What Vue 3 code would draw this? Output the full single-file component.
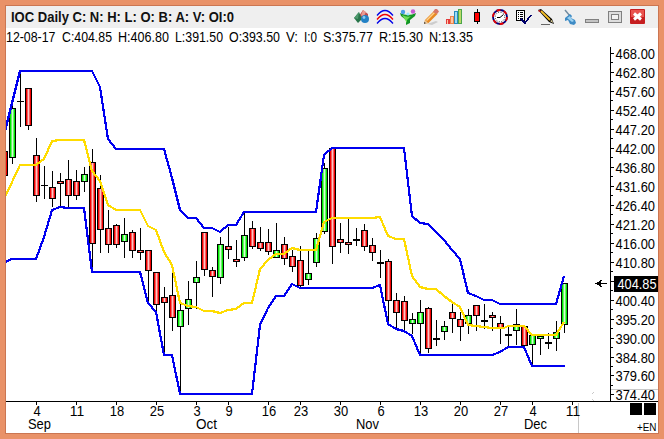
<template>
  <div class="window">
    <!-- 标题栏 -->
    <header class="title-bar">
      <svg class="title" width="300" height="22">
        <text x="5" y="16" textLength="223" lengthAdjust="spacingAndGlyphs">IOC Daily C: N: H: L: O: B: A: V: OI:0</text>
      </svg>
      <div class="toolbar">
        <!-- shapes -->
        <svg viewBox="0 0 23 22">
          <path d="M13 4l5 4v5l-6 1-3-4z" fill="#bd4a4d" />
          <path d="M13 4l3 2-3 6-2-3z" fill="#e99a91" />
          <path d="M4 12l5-6 3 7-4 4z" fill="#28754a" />
          <path d="M4 12l4 1 1-7z" fill="#4f9a6e" />
          <circle cx="15" cy="13" r="4" fill="#2381c5" />
          <circle cx="14" cy="11.5" r="1.4" fill="#8acaf0" />
        </svg>
        <!-- bands -->
        <svg viewBox="0 0 23 22" fill="none" stroke-width="1.3">
          <path d="M4 9.500Q12 -0.500 20 9.500M4 17.500Q12 7.500 20 17.500" stroke="#0000e8" />
          <path d="M4 13.500Q12 3.500 20 13.500" stroke="#f00000" />
        </svg>
        <!-- filter -->
        <svg viewBox="0 0 23 22">
          <path d="M4 7q8 4 16 0l-1 3-5 4v3l-4 2v-5l-5-4z" fill="#129526" />
          <path d="M6 9q6 3 9 1l-4 4v3z" fill="#6bdc55" />
          <circle cx="7" cy="6" r="2.2" fill="#4b9ee8" />
          <circle cx="17" cy="5.500" r="2.2" fill="#c65ad2" />
          <circle cx="12" cy="8" r="1.6" fill="#9be7ff" />
        </svg>
        <!-- pencil -->
        <svg viewBox="0 0 23 22">
          <path d="M8 18l9-3 2 1-6 3z" fill="#ccc" />
          <path d="M5 18l1-4 9-9 3.500 3-9 9z" fill="#e78a25" />
          <path d="M7 14l8-8 1 1-8 8z" fill="#ffd28a" />
          <path d="M14 6l2-3h2l2 2.500-2 2.500z" fill="#d7776a" />
          <path d="M5 18l1-4 3 3z" fill="#e9c99b" />
          <path d="M5 18v-2l2 1z" fill="#444" />
        </svg>
        <!-- bars -->
        <svg viewBox="0 0 23 22">
          <path d="M4 13h4v5H4z" fill="#e43b3b" />
          <path d="M8 10h4v8H8z" fill="#f0854a" />
          <path d="M12 5h4v13h-4z" fill="#288bbd" />
          <path d="M13 6h2v11h-2z" fill="#9ddcf2" />
          <path d="M16 3h4v15h-4z" fill="#4ca64a" />
          <path d="M17 4h2v13h-2z" fill="#b9d968" />
          <path d="M5 14h1v4H5zM9 11h2v6H9z" fill="#ffc6a4" />
        </svg>
        <!-- candle -->
        <svg viewBox="0 0 23 22" shape-rendering="crispEdges">
          <path d="M12 3h1v15h-1zM9 6h6v10H9z" fill="#000" />
          <path d="M10 7h4v8h-4z" fill="#f00" />
        </svg>
        <!-- clock -->
        <svg viewBox="0 0 23 22">
          <circle cx="12" cy="11" r="7" fill="#fff" stroke="#00007a" stroke-width="1.8" />
          <circle cx="12" cy="11" r="7" fill="none" stroke="#e80000" stroke-width="1.800" stroke-dasharray="4 3.33" />
          <circle cx="12" cy="11" r="4.8" fill="none" stroke="#000" stroke-width="0.800" stroke-dasharray="1 1.51" />
          <path d="M15.500 8.500l-3.500 3H9" fill="none" stroke="#000" />
        </svg>
        <!-- checklist -->
        <svg viewBox="0 0 23 22" shape-rendering="crispEdges">
          <path d="M5.500 4.500h8v10h-8z" fill="#fff" stroke="#000" />
          <path d="M7 6.500h1m1 0h3M7 8.500h1m1 0h3M7 10.500h1m1 0h3M7 12.500h1m1 0h3" stroke="#000" />
          <path d="M10 13l4 4 6-8" fill="none" stroke="#00006b" stroke-width="1.600" />
        </svg>
        <!-- draw -->
        <svg viewBox="0 0 23 22">
          <path d="M7 18.500h9" stroke="#666" />
          <path d="M4 4l3-1 11 10 2 5-5-2z" fill="#000" />
          <path d="M7 5l9 9" stroke="#f5bf29" stroke-width="1.800" />
          <path d="M4.500 4.500l2 1" stroke="#c32222" stroke-width="1.500" />
          <path d="M16 15l2-1 1 3z" fill="#e8d8a0" />
        </svg>
        <!-- pin -->
        <svg viewBox="0 0 23 22">
          <path d="M8 4l5 6" stroke="#718a9e" stroke-width="1.400" />
          <path d="M8 12l5-4 2 2-1 2 4 2 1 3-2 2-4-1-2-4-3 1z" fill="#3e8bc5" />
          <path d="M10 12l3-2 1 2 3 3-2 1z" fill="#9bd1f1" />
        </svg>
        <!-- minimise -->
        <svg viewBox="0 0 23 22" shape-rendering="crispEdges">
          <path d="M5.500 13.500h13v3h-13z" fill="#c4c4c4" stroke="#808080" />
        </svg>
        <!-- restore -->
        <svg viewBox="0 0 23 22" shape-rendering="crispEdges">
          <path d="M5.500 5.500h13v11h-13z" fill="#ddd" stroke="#808080" />
          <path d="M8.500 8.500h7v5h-7z" fill="#f2f2f2" stroke="#808080" />
        </svg>
        <!-- close -->
        <svg viewBox="0 0 23 22">
          <rect x="4" y="3" width="15" height="15" rx="1" fill="#c61e20" />
          <rect x="5" y="4" width="13" height="7" fill="#e9534e" />
          <path d="M8 7.500l7 6M15 7.500l-7 6" stroke="#fff" stroke-width="3" />
        </svg>
      </div>
    </header>

    <!-- 行情信息 -->
    <div class="quote">
      <svg width="652" height="18">
        <text v-for="q in quotes" :key="q.t" :x="q.x" y="14" :textLength="q.w" lengthAdjust="spacingAndGlyphs">{{ q.t }}</text>
      </svg>
    </div>

    <!-- K线图 -->
    <svg class="chart" width="652" height="387" viewBox="6 46 652 387">
      <defs>
        <linearGradient id="up">
          <stop offset="0.1" stop-color="#00e800" />
          <stop offset="0.5" stop-color="#d4ffd4" />
          <stop offset="0.9" stop-color="#00e800" />
        </linearGradient>
        <linearGradient id="down">
          <stop offset="0.1" stop-color="#f00000" />
          <stop offset="0.5" stop-color="#ffc4c4" />
          <stop offset="0.9" stop-color="#f00000" />
        </linearGradient>
      </defs>

      <g shape-rendering="crispEdges">
        <g v-for="c in candles" :key="c.x">
          <rect :x="c.x" :y="c.high" width="1" :height="c.low - c.high + 1" />
          <rect :x="c.x - 3" :y="c.top" width="7" :height="c.bottom - c.top + 1" />
          <rect v-if="c.kind !== 'd'" :x="c.x - 2" :y="c.top + 1" width="5" :height="c.bottom - c.top - 1" :fill="c.kind === 'u' ? 'url(#up)' : 'url(#down)'" />
        </g>
        <polyline class="band" :points="upper" />
        <polyline class="band" :points="lower" />
        <polyline class="middle" :points="middle" />

        <!-- 坐标轴 -->
        <path class="guide" d="M611 389.500h47M578.500 403v30M593.500 392v1M592.500 393v1M592.500 399v1M593.500 400v1" />
        <path class="axis" d="M610.500 47v355M6 401.500h652" />
        <path v-for="(p, i) in prices" :key="p" class="axis" :d="`M611 ${priceY(i)}h3${i < 18 ? `M611 ${priceY(i + 0.5)}h2` : ''}`" />
        <path v-for="d in days" :key="d[0]" class="axis" :d="`M${d[0] + 0.5} 402v3`" />
        <path d="M595 283h12v1h-12zM595 283.500l7-4-1.500 4 1.500 4zM630 403h12v12h-12zM644 403h12v12h-12z" />
      </g>

      <template v-for="(p, i) in prices" :key="p">
        <text v-if="i !== 12" x="615.5" :y="priceY(i) + 5" textLength="39.5" lengthAdjust="spacingAndGlyphs">{{ p }}</text>
      </template>
      <rect x="614" y="276" width="44" height="16" />
      <text class="last" x="617.5" y="289" textLength="39" lengthAdjust="spacingAndGlyphs">404.85</text>
      <text v-for="d in days" :key="d[0]" :x="d[0] + 1 - d[1].length * 3.6" y="416" :textLength="d[1].length * 7.2" lengthAdjust="spacingAndGlyphs">{{ d[1] }}</text>
      <text v-for="m in months" :key="m[1]" :x="m[0]" y="429" :textLength="m[2]" lengthAdjust="spacingAndGlyphs">{{ m[1] }}</text>
      <text class="lang" x="637" y="431" textLength="19.5" lengthAdjust="spacingAndGlyphs">+EN</text>
    </svg>
  </div>
</template>

<script setup>
const quotes = [
  { x: 0, w: 49.5, t: '12-08-17' },
  { x: 56, w: 50, t: 'C:404.85' },
  { x: 112, w: 51, t: 'H:406.80' },
  { x: 169, w: 48, t: 'L:391.50' },
  { x: 223, w: 51, t: 'O:393.50' },
  { x: 280, w: 12, t: 'V:' },
  { x: 298, w: 13, t: 'I:0' },
  { x: 317, w: 50, t: 'S:375.77' },
  { x: 373, w: 44, t: 'R:15.30' },
  { x: 423, w: 44, t: 'N:13.35' }
]

// kind, high, top, bottom, low (u: up, r: down, d: doji)
const rows = [
  ['r', 151, 151, 175, 175], ['u', 105, 108, 157, 163], ['d', 73, 101, 101, 126],
  ['r', 88, 88, 125, 129], ['r', 138, 155, 195, 201], ['d', 166, 185, 185, 198],
  ['r', 171, 187, 198, 206], ['r', 173, 181, 183, 205], ['r', 160, 179, 195, 206],
  ['r', 170, 181, 195, 199], ['u', 167, 174, 181, 191], ['r', 149, 162, 243, 270],
  ['r', 175, 188, 229, 252], ['r', 210, 228, 244, 252], ['r', 224, 225, 244, 247],
  ['u', 218, 234, 241, 257], ['r', 230, 232, 250, 257], ['r', 228, 250, 252, 259],
  ['r', 250, 250, 270, 303], ['r', 272, 272, 304, 311], ['r', 287, 297, 302, 354],
  ['r', 272, 295, 317, 330], ['u', 303, 310, 326, 393], ['u', 281, 299, 308, 324],
  ['u', 261, 277, 282, 308], ['r', 232, 232, 269, 275], ['r', 267, 270, 276, 296],
  ['u', 237, 244, 277, 283], ['r', 227, 246, 249, 258], ['r', 240, 259, 261, 266],
  ['u', 212, 235, 257, 260], ['r', 221, 228, 246, 248], ['r', 227, 242, 248, 250],
  ['r', 229, 242, 251, 254], ['u', 223, 250, 257, 257], ['r', 237, 244, 258, 264],
  ['r', 250, 256, 266, 271], ['r', 246, 260, 285, 287], ['u', 251, 273, 279, 284],
  ['u', 233, 238, 262, 266], ['u', 163, 168, 231, 233], ['r', 148, 148, 246, 263],
  ['r', 223, 239, 242, 252], ['r', 219, 242, 244, 253], ['d', 228, 239, 240, 245],
  ['r', 224, 230, 246, 250], ['r', 238, 245, 252, 260], ['d', 250, 262, 263, 277],
  ['r', 259, 261, 300, 325], ['r', 293, 300, 312, 327], ['r', 296, 301, 320, 330],
  ['u', 313, 319, 323, 333], ['u', 300, 312, 323, 353], ['r', 307, 308, 348, 352],
  ['d', 320, 338, 339, 345], ['u', 321, 326, 331, 339], ['r', 304, 312, 318, 332],
  ['r', 312, 319, 326, 340], ['u', 309, 315, 323, 333], ['r', 305, 305, 315, 330],
  ['d', 304, 320, 321, 328], ['r', 312, 315, 317, 330], ['r', 316, 323, 328, 343],
  ['d', 327, 334, 335, 347], ['u', 309, 324, 330, 344], ['r', 326, 326, 345, 345],
  ['u', 334, 335, 344, 365], ['u', 334, 336, 338, 354], ['d', 333, 342, 343, 348],
  ['u', 321, 332, 338, 350], ['u', 283, 283, 324, 332]
]
const candles = rows.map(([kind, high, top, bottom, low], i) => ({ x: 4 + i * 8, kind, high, top, bottom, low }))

const upper = '5,131 6,127 12,103 20,71 92,71 100,87 108,139 116,149 164,149 172,178 180,210 188,218 196,218 204,228 212,228 220,232 228,225 236,225 244,212 316,212 324,155 332,148 404,148 412,216 420,223 428,224 436,232 444,240 452,250 460,259 468,293 476,296 484,300 492,300 500,304 556,304 564,276'
const lower = '5,262 12,259 36,259 44,237 52,210 60,207 68,208 84,208 92,272 140,272 148,303 156,312 164,355 172,355 180,394 252,394 260,325 268,308 276,296 284,296 292,284 300,288 372,288 380,285 388,324 396,329 404,331 412,336 420,355 492,355 500,352 508,347 524,347 532,366 565,366'
const middle = '5,197 20,165 36,165 44,159 52,141 60,140 84,140 92,171 100,181 108,205 116,210 140,210 148,226 156,230 164,252 172,265 180,303 188,306 196,307 204,311 212,311 220,313 228,310 236,309 244,303 252,303 260,269 268,260 276,254 284,254 292,248 300,250 316,250 324,222 332,218 372,218 380,217 388,236 396,239 404,239 412,276 420,287 428,289 436,289 444,296 452,302 460,307 468,325 476,326 484,327 492,328 504,328 508,326 524,326 532,335 556,335 564,322'

const prices = Array.from({ length: 19 }, (_, i) => (468 - i * 5.2).toFixed(2))
const priceY = (i) => Math.round(53 + i * 18.97) + 0.5

const days = [
  [36, '4'], [76, '11'], [116, '18'], [156, '25'], [196, '3'],
  [228, '9'], [268, '16'], [300, '23'], [340, '30'], [380, '6'],
  [420, '13'], [460, '20'], [500, '27'], [532, '4'], [572, '11']
]
const months = [[28, 'Sep', 23], [196, 'Oct', 21], [356, 'Nov', 23], [524, 'Dec', 23]]
</script>

<style>
body {
  background: #e99268;
  overflow: hidden;
}
</style>

<style scoped>
.window {
  box-sizing: border-box;
  width: 654px;
  height: 429px;
  margin: 5px;
  border: 1px solid #cb7652;
  background: #fff;
  font-family: "Liberation Sans", Arial, sans-serif;
}

.title-bar {
  display: flex;
  justify-content: space-between;
  height: 22px;
  padding-right: 9px;
  background: #efefef;
}

.title {
  overflow: visible;
  font-size: 14px;
  font-weight: bold;
  fill: #111;
}

.toolbar {
  display: flex;
}

.toolbar svg {
  width: 23px;
  height: 22px;
}

.quote {
  height: 18px;
  font-size: 14px;
}

.quote svg,
.chart {
  display: block;
}

.chart {
  font-size: 14px;
}

.band {
  fill: none;
  stroke: #0000f0;
  stroke-width: 2.2;
  stroke-linejoin: round;
}

.middle {
  fill: none;
  stroke: #ffdc00;
  stroke-width: 2.2;
  stroke-linejoin: round;
}

.axis {
  stroke: #000;
}

.guide {
  stroke: #c8c8c8;
}

.last {
  fill: #fff;
}

.lang {
  font-size: 11.5px;
}
</style>
